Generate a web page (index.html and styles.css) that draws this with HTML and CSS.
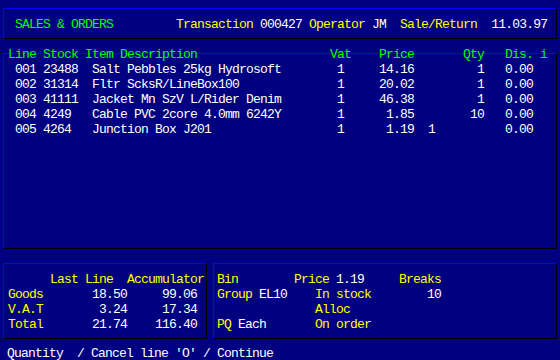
FILE: index.html
```html
<!DOCTYPE html>
<html>
<head>
<meta charset="utf-8">
<link rel="stylesheet" href="styles.css">
</head>
<body>
<div class="box title-box">
<div class="ln"><span class="g">SALES &amp; ORDERS</span>         <span class="y">Transaction</span> 000427 <span class="y">Operator</span> JM  <span class="y">Sale/Return</span>  11.03.97</div>
</div>
<div class="box items">
<div class="ln g head">Line Stock Item Description                   Vat    Price       Qty   Dis. i</div>
<div class="ln"> 001 23488  Salt Pebbles 25kg Hydrosoft        1     14.16         1   0.00</div>
<div class="ln"> 002 31314  Fltr ScksR/LineBox100              1     20.02         1   0.00</div>
<div class="ln"> 003 41111  Jacket Mn SzV L/Rider Denim        1     46.38         1   0.00</div>
<div class="ln"> 004 4249   Cable PVC 2core 4.0mm 6242Y        1      1.85        10   0.00</div>
<div class="ln"> 005 4264   Junction Box J201                  1      1.19  1          0.00</div>
</div>
<div class="bottom">
<div class="box totals">
<div class="ln y">      Last Line  Accumulator</div>
<div class="ln"><span class="y">Goods</span>       18.50     99.06</div>
<div class="ln"><span class="y">V.A.T</span>        3.24     17.34</div>
<div class="ln"><span class="y">Total</span>       21.74    116.40</div>
</div>
<div class="box info">
<div class="ln"><span class="y">Bin</span>        <span class="y">Price</span> 1.19     <span class="y">Breaks</span></div>
<div class="ln"><span class="y">Group</span> EL10    <span class="y">In stock</span>        10</div>
<div class="ln">              <span class="y">Alloc</span></div>
<div class="ln"><span class="y">PQ</span> Each       <span class="y">On order</span></div>
</div>
</div>
<div class="ln status">Quantity  / Cancel line 'O' / Continue</div>
</body>
</html>
```
FILE: styles.css
```css
* {
  box-sizing: border-box;
  margin: 0;
  padding: 0;
}
html, body {
  width: 560px;
  height: 360px;
  background: #000080;
  overflow: hidden;
}
body {
  font-family: "Liberation Mono", "DejaVu Sans Mono", monospace;
  font-size: 13px;
  letter-spacing: -0.8px;
  line-height: 15px;
  color: #ffffff;
  padding: 8px 0 0 3px;
}
.ln {
  white-space: pre;
  height: 15px;
}
.g { color: #00ff00; }
.y { color: #ffff00; }
.box {
  border: 1px solid;
  border-color: #0000ff #000000 #000000 #0000ff;
}
.title-box {
  width: 554px;
  height: 31px;
  padding: 8px 0 0 11px;
}
.items {
  margin-top: 14px;
  width: 554px;
  height: 196px;
  padding-left: 4px;
}
.items .head {
  margin-top: -7px;
}
.bottom {
  display: flex;
  gap: 6px;
  margin-top: 14px;
}
.totals {
  width: 204px;
  height: 76px;
  padding: 8px 0 0 4px;
}
.info {
  width: 344px;
  height: 76px;
  padding: 8px 0 0 3px;
}
.status {
  margin-top: 7px;
  padding-left: 4px;
}
```
